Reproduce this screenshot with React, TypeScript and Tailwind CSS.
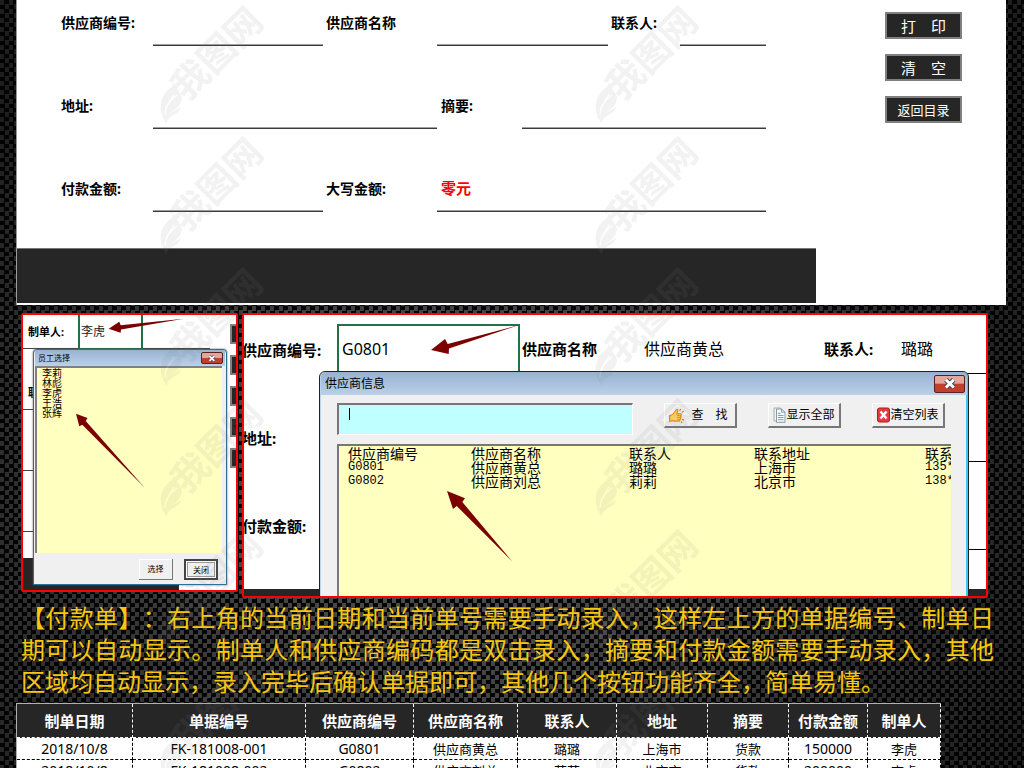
import React from "react";

const YAHEI = "font-['Noto_Sans','Noto_Sans_CJK_SC',sans-serif]";

function Watermark() {
  return (
    <svg
      aria-hidden="true"
      className="pointer-events-none absolute inset-0 h-full w-full opacity-[0.1]"
    >
      <defs>
        <pattern id="mark" x="150" y="0" width="435" height="131" patternUnits="userSpaceOnUse">
          <text
            x="37"
            y="102"
            transform="rotate(-45 37 102)"
            fontSize="37"
            fontWeight="700"
            fill="#848484"
            fontFamily="'Noto Sans CJK SC', sans-serif"
          >
            我图网
          </text>
          <path
            fill="#848484"
            d="M17 124c-9-12-9-28 5-37l2-5c2 8 7 10 8 16-1 9-8 12-13 16l12-7c-2 7-8 7-12 11-2 2-2 4-2 6z"
          />
          <path
            fill="none"
            stroke="#fff"
            strokeWidth="1.5"
            d="M15 115c0-9 5-15 12-20M16 108c3-6 5-8 8-14"
          />
        </pattern>
      </defs>
      <rect width="100%" height="100%" fill="url(#mark)" />
    </svg>
  );
}

const LABEL = "self-end pb-[13px] text-sm leading-5 font-bold whitespace-nowrap text-black";
const LINE =
  "h-12 w-full min-w-0 self-end border-b border-[#3a3a3a] bg-transparent px-1 shadow-[inset_0_-1px_0_#a0a0a0] outline-none";
const SHEET_BUTTON =
  "h-[27px] w-[77px] border-2 border-[#808080] bg-[#262626] leading-5 whitespace-nowrap text-white";

function PaymentForm() {
  return (
    <section className="relative mr-[18px] ml-4 flex justify-between border-l border-[#9a9a9a] bg-white pb-0.5">
      <div className="min-w-0 flex-1">
        <form className="mr-[50px] ml-11 grid grid-cols-[92px_170fr_3px_111px_85fr_86fr_3px_69px_86fr] grid-rows-[46px_83px_83px]">
          <label htmlFor="code" className={LABEL}>供应商编号:</label>
          <input id="code" className={LINE} />
          <label htmlFor="name" className={`${LABEL} col-start-4`}>供应商名称</label>
          <input id="name" className={`${LINE} col-span-2`} />
          <label htmlFor="contact" className={`${LABEL} col-start-8`}>联系人:</label>
          <input id="contact" className={LINE} />

          <label htmlFor="address" className={LABEL}>地址:</label>
          <input id="address" className={`${LINE} col-span-3`} />
          <label htmlFor="summary" className={`${LABEL} pl-1`}>摘要:</label>
          <input id="summary" className={`${LINE} col-span-4`} />

          <label htmlFor="amount" className={LABEL}>付款金额:</label>
          <input id="amount" className={LINE} />
          <label htmlFor="words" className={`${LABEL} col-start-4`}>大写金额:</label>
          <input
            id="words"
            defaultValue="零元"
            className={`${LINE} col-span-5 text-[15px] font-bold text-[#ff0000]`}
          />
        </form>
        <div className="mt-9 h-[55px] border-t border-[#777] bg-[#262626]" />
      </div>
      <div className="mt-3 mr-11 ml-[69px] flex flex-col gap-[15px]">
        <button className={`${SHEET_BUTTON} text-[15px]`}>打　印</button>
        <button className={`${SHEET_BUTTON} text-[15px]`}>清　空</button>
        <button className={`${SHEET_BUTTON} text-[13px]`}>返回目录</button>
      </div>
    </section>
  );
}

function CloseButton({ className }: { className: string }) {
  return (
    <button
      aria-label="关闭窗口"
      className={`flex items-center justify-center rounded-[2px] border border-[#5b2020] bg-linear-to-b from-[#e3a79d] from-45% to-[#c0402c] to-50% ${className}`}
    >
      <svg viewBox="0 0 14 10" className="h-[70%]">
        <path d="M3.5 1.5l7 7M10.5 1.5l-7 7" stroke="#4a4a5c" strokeWidth="4.4" />
        <path d="M3.5 1.5l7 7M10.5 1.5l-7 7" stroke="#fff" strokeWidth="2.6" />
      </svg>
    </button>
  );
}

const STAFF = ["李莉", "林彪", "李虎", "王浩", "张辉"];
const SMALL_BUTTON =
  "h-[21px] w-[34px] bg-[#f0f0f0] text-[8px] leading-3 text-black";

function StaffPanel() {
  return (
    <section className="relative h-[279px] w-[217px] shrink-0 overflow-hidden rounded-[2px] border-2 border-[#ff0000] bg-white">
      <div className="flex h-full flex-col justify-between">
        <div className="flex">
          <div className="mr-5 flex flex-1 flex-col">
            <div className="flex h-[34px] items-center border-b border-[#444]">
              <label htmlFor="maker" className="w-[55px] pl-[5px] text-[11px] leading-4 font-bold whitespace-nowrap">
                制单人:
              </label>
              <input
                id="maker"
                defaultValue="李虎"
                className="h-[36px] w-[65px] border-x-2 border-b-2 border-[#217346] bg-white px-px text-xs text-[#222] outline-none"
              />
            </div>
            <div className="flex h-[61px] items-end border-b border-[#444] pb-2 pl-[5px] text-[11px] leading-4 font-bold">
              联系人:
            </div>
            <div className="h-[61px] border-b border-[#444]" />
            <div className="h-[61px] border-b border-[#444]" />
          </div>
          <div className="mt-[9px] flex w-[6px] flex-col gap-[11px]">
            {[0, 1, 2, 3, 4].map((n) => (
              <span key={n} className="h-5 border-y-2 border-l-2 border-[#808080] bg-[#262626]" />
            ))}
          </div>
        </div>
        <div className="h-8 w-[156px] bg-[#262626]" />
      </div>

      <div className="absolute top-[34px] left-[10px] flex h-[236px] w-[194px] flex-col rounded-t-[4px] border border-[#2b6f93] bg-[#f0f0f0] px-px pb-px shadow-[0_0_2px_#555]">
        <header className="flex h-4 items-center justify-between bg-linear-to-b from-[#98b3d2] to-[#bcd1ea] pr-0.5 pl-[3px]">
          <h2 className="text-[8px] leading-3 text-black">员工选择</h2>
          <CloseButton className="h-3 w-[22px]" />
        </header>
        <ul className="mr-[3px] flex-1 border-t-2 border-l-2 border-[#808080] bg-[#ffffc0] pl-[5px] text-[10px] leading-[10px] text-black">
          {STAFF.map((name) => (
            <li key={name}>{name}</li>
          ))}
        </ul>
        <footer className="flex h-[30px] items-center justify-end gap-[11px] pt-[3px] pr-[7px]">
          <button className={`${SMALL_BUTTON} border-r border-b border-[#777] shadow-[inset_1px_1px_0_#fff]`}>选择</button>
          <button className={`${SMALL_BUTTON} border-2 border-[#444] shadow-[inset_0_0_0_1px_#fff,inset_0_0_0_2px_#999]`}>
            关闭
          </button>
        </footer>
      </div>

      <svg aria-hidden="true" viewBox="23 315 213 275" className="pointer-events-none absolute top-0 left-0 h-[275px] w-[213px]">
        <path fill="#7d0000" d="M108.7 328.7l10.6-7 1.4 3.6 63-6.6-62.7 10.8-.4 3.2z" />
        <path fill="#7d0000" d="M76 413.7l11.5 4.3-1.8 3 59 66.7-62.4-63-3 1.5z" />
      </svg>
    </section>
  );
}

function HandIcon() {
  return (
    <svg viewBox="0 0 16 16" className="h-[17px] w-[17px] shrink-0">
      <path
        d="M1.500 8.200L4.500 7 7.300 3c.9-1.300 2.300-.5 1.800.9L8.300 6.300h3.400c1.300 0 1.300 1.800 0 1.800.9.300.9 1.700-.2 1.800.8.400.6 1.700-.4 1.800.5.600.2 1.600-.8 1.600H6.200L4.800 12.900 1.500 13.500z"
        fill="#ffd35a"
        stroke="#e8820c"
      />
      <path d="M8.500 8.100h3M8.500 9.900h2.800M8.500 11.700h2.400" stroke="#e8820c" strokeWidth=".8" />
      <path d="M11 3.500l1-1.700M13.200 5l1.600-1.200M13.300 11.500l1.600 1M12.300 13.600l1 1.500" stroke="#b86a1c" />
    </svg>
  );
}

function PageIcon() {
  return (
    <svg viewBox="0 0 13 16" className="h-4 w-[13px] shrink-0">
      <path d="M1 1h6.500v13H1z" fill="#eef3f5" stroke="#a3b0b8" />
      <path d="M3.500 2h5L12 5.200V15.300H3.500z" fill="#f7fafb" stroke="#8b9ba5" />
      <path d="M8.500 2v3.200H12M5 6.500h2.500M5 8.500h5.500M5 10.500h5.500M5 12.700h5.500" fill="none" stroke="#8b9ba5" />
    </svg>
  );
}

function ClearIcon() {
  return (
    <svg viewBox="0 0 13 16" className="h-4 w-[13px] shrink-0">
      <rect x=".5" y="1" width="12" height="14" rx="2" fill="#e23b42" stroke="#b3161d" />
      <path d="M3.500 4.500l6 7M9.500 4.500l-6 7" stroke="#fff" strokeWidth="2.400" />
    </svg>
  );
}

const TOOL_BUTTON =
  "flex h-[25px] w-[73px] items-center justify-center border-t border-r-2 border-b-2 border-l border-t-white border-r-[#777] border-b-[#777] border-l-white bg-[#f0f0f0] text-xs leading-4 whitespace-nowrap text-black";

const SUPPLIERS = [
  ["供应商编号", "供应商名称", "联系人", "联系地址", "联系电话"],
  ["G0801", "供应商黄总", "璐璐", "上海市", "135****"],
  ["G0802", "供应商刘总", "莉莉", "北京市", "138****"],
];

function SupplierDialog() {
  return (
    <div className="absolute top-[56px] right-[17px] left-[75px] flex h-[240px] flex-col rounded-t-[6px] border border-[#222] bg-[#f0f0f0] shadow-[inset_1px_0_0_#b9d5ee,inset_-2px_0_0_#3cc8f0]">
      <header className="mx-px flex h-[23px] shrink-0 items-center justify-between rounded-t-[5px] bg-linear-to-b from-[#97b2d1] to-[#bbd0e9] pr-0.5 pl-1">
        <h2 className="text-xs leading-4 text-black">供应商信息</h2>
        <CloseButton className="h-[18px] w-[31px]" />
      </header>
      <div className="mr-[23px] ml-[17px] flex items-start justify-between pt-2">
        <div className="flex h-8 w-[296px] border-t-2 border-r border-b border-l-2 border-t-[#777] border-r-white border-b-white border-l-[#777] bg-[#bfffff] pt-[3px] pl-[10px]">
          <span className="h-3 w-px bg-black" />
          <input aria-label="查找供应商" className="h-5 min-w-0 flex-1 bg-transparent outline-none" />
        </div>
        <div className="flex gap-[31px]">
          <button className={`${TOOL_BUTTON} gap-1.5 pr-1`}>
            <HandIcon />
            查　找
          </button>
          <button className={TOOL_BUTTON}>
            <PageIcon />
            显示全部
          </button>
          <button className={TOOL_BUTTON}>
            <ClearIcon />
            清空列表
          </button>
        </div>
      </div>
      <div className="mt-[9px] mr-[17px] ml-[17px] flex-1 overflow-hidden border-t-2 border-l-2 border-[#777] bg-[#ffffc0] pl-[9px] font-['Noto_Sans_CJK_SC',sans-serif] text-sm leading-[14px] text-black">
        <table className="w-full table-fixed border-separate border-spacing-0">
          <colgroup>
            <col className="w-[123px]" />
            <col className="w-[158px]" />
            <col className="w-[125px]" />
            <col className="w-[171px]" />
            <col />
          </colgroup>
          <tbody>
            {SUPPLIERS.map((row) => (
              <tr key={row[0]} className="h-[14px]">
                {row.map((cell) => (
                  <td
                    key={cell}
                    className={`p-0 align-middle whitespace-nowrap ${
                      /^[G1]/.test(cell) ? "font-['Liberation_Mono',monospace] text-xs leading-[14px]" : ""
                    }`}
                  >
                    {cell}
                  </td>
                ))}
              </tr>
            ))}
          </tbody>
        </table>
      </div>
    </div>
  );
}

function SupplierPanel() {
  return (
    <section className="relative h-[285px] min-w-0 flex-1 overflow-hidden rounded-[2px] border-2 border-[#ff0000] bg-white text-[15px] leading-5 text-black">
      <div className="flex h-full flex-col">
        <div className="flex h-[59px] shrink-0">
          <label htmlFor="picked" className="-ml-0.5 w-[95px] shrink-0 pt-[25px] font-bold whitespace-nowrap">供应商编号:</label>
          <div className="flex flex-1 items-center border-b border-black pt-2.5">
            <input
              id="picked"
              defaultValue="G0801"
              className="h-[50px] w-[183px] border-2 border-[#217346] px-[3px] text-base outline-none"
            />
            <span className="ml-0.5 w-[122px] font-bold">供应商名称</span>
            <span className="w-[180px] text-base">供应商黄总</span>
            <span className="w-[77px] font-bold">联系人:</span>
            <span className="text-base">璐璐</span>
          </div>
        </div>
        <div className="-ml-0.5 flex h-[88px] shrink-0">
          <span className="w-[95px] self-end pb-[14px] font-bold">地址:</span>
          <span className="flex-1 border-b border-black" />
        </div>
        <div className="-ml-0.5 flex h-[88px] shrink-0">
          <span className="w-[95px] self-end pb-[14px] font-bold">付款金额:</span>
          <span className="flex-1 border-b border-black" />
        </div>
        <div className="mt-auto h-[7px] bg-[#262626]" />
      </div>
      <SupplierDialog />
      <svg aria-hidden="true" viewBox="244 315 300 281" className="pointer-events-none absolute top-0 left-0 h-[281px] w-[300px]">
        <path fill="#7d0000" d="M431 350l14-11 2.700 5 71.600-19-70.300 23.500-.3 5.500z" />
        <path fill="#7d0000" d="M447 491l18 7.300-2.700 3.700 50.400 60-56-56-3.700 3z" />
      </svg>
    </section>
  );
}

const COLUMNS: [string, string][] = [
  ["制单日期", "w-[116px]"],
  ["单据编号", "w-[173px]"],
  ["供应商编号", "w-[108px]"],
  ["供应商名称", "w-[104px]"],
  ["联系人", "w-[99px]"],
  ["地址", "w-[91px]"],
  ["摘要", "w-[81px]"],
  ["付款金额", "w-[79px]"],
  ["制单人", "w-[73px]"],
];

const RECORDS = [
  ["2018/10/8", "FK-181008-001", "G0801", "供应商黄总", "璐璐", "上海市", "货款", "150000", "李虎"],
  ["2018/10/8", "FK-181008-002", "G0802", "供应商刘总", "莉莉", "北京市", "货款", "200000", "李虎"],
];

function RecordTable() {
  return (
    <div className="mt-[5px] mr-[83px] ml-4">
      <table className="w-full table-fixed border-separate border-spacing-0 border-t border-l border-[#b0b0b0] text-center text-black">
        <thead>
          <tr className="h-[34px] bg-[#262626]">
            {COLUMNS.map(([title, width]) => (
              <th
                key={title}
                className={`${width} border-r border-b border-dashed border-white p-0 text-[15px] leading-5 font-bold whitespace-nowrap text-white`}
              >
                {title}
              </th>
            ))}
          </tr>
        </thead>
        <tbody>
          {RECORDS.map((record) => (
            <tr key={record[1]} className="h-[22px] bg-white">
              {record.map((value, i) => (
                <td
                  key={i}
                  className={`border-r border-b border-dashed border-black p-0 leading-5 whitespace-nowrap ${
                    /\d/.test(value) ? "text-sm" : "text-[13px]"
                  }`}
                >
                  {value}
                </td>
              ))}
            </tr>
          ))}
        </tbody>
      </table>
    </div>
  );
}

export default function App() {
  return (
    <main
      className={`relative h-screen overflow-hidden ${YAHEI} [background-image:radial-gradient(ellipse_70%_80%_at_45%_65%,transparent_20%,rgba(0,0,0,0.6)_90%),repeating-conic-gradient(#050505_0_25%,#4a4a4a_0_50%)] [background-size:auto,9px_9px]`}
    >
      <PaymentForm />
      <div className="mt-2 mr-9 ml-[21px] flex items-start gap-1">
        <StaffPanel />
        <SupplierPanel />
      </div>
      <p className="mt-1 mr-[30px] ml-[21px] text-justify text-2xl leading-8 text-[#f9c80e] [text-spacing-trim:space-all]">
        【付款单】：右上角的当前日期和当前单号需要手动录入，这样左上方的单据编号、制单日期可以自动显示。制单人和供应商编码都是双击录入，摘要和付款金额需要手动录入，其他区域均自动显示，录入完毕后确认单据即可，其他几个按钮功能齐全，简单易懂。
      </p>
      <RecordTable />
      <Watermark />
    </main>
  );
}
